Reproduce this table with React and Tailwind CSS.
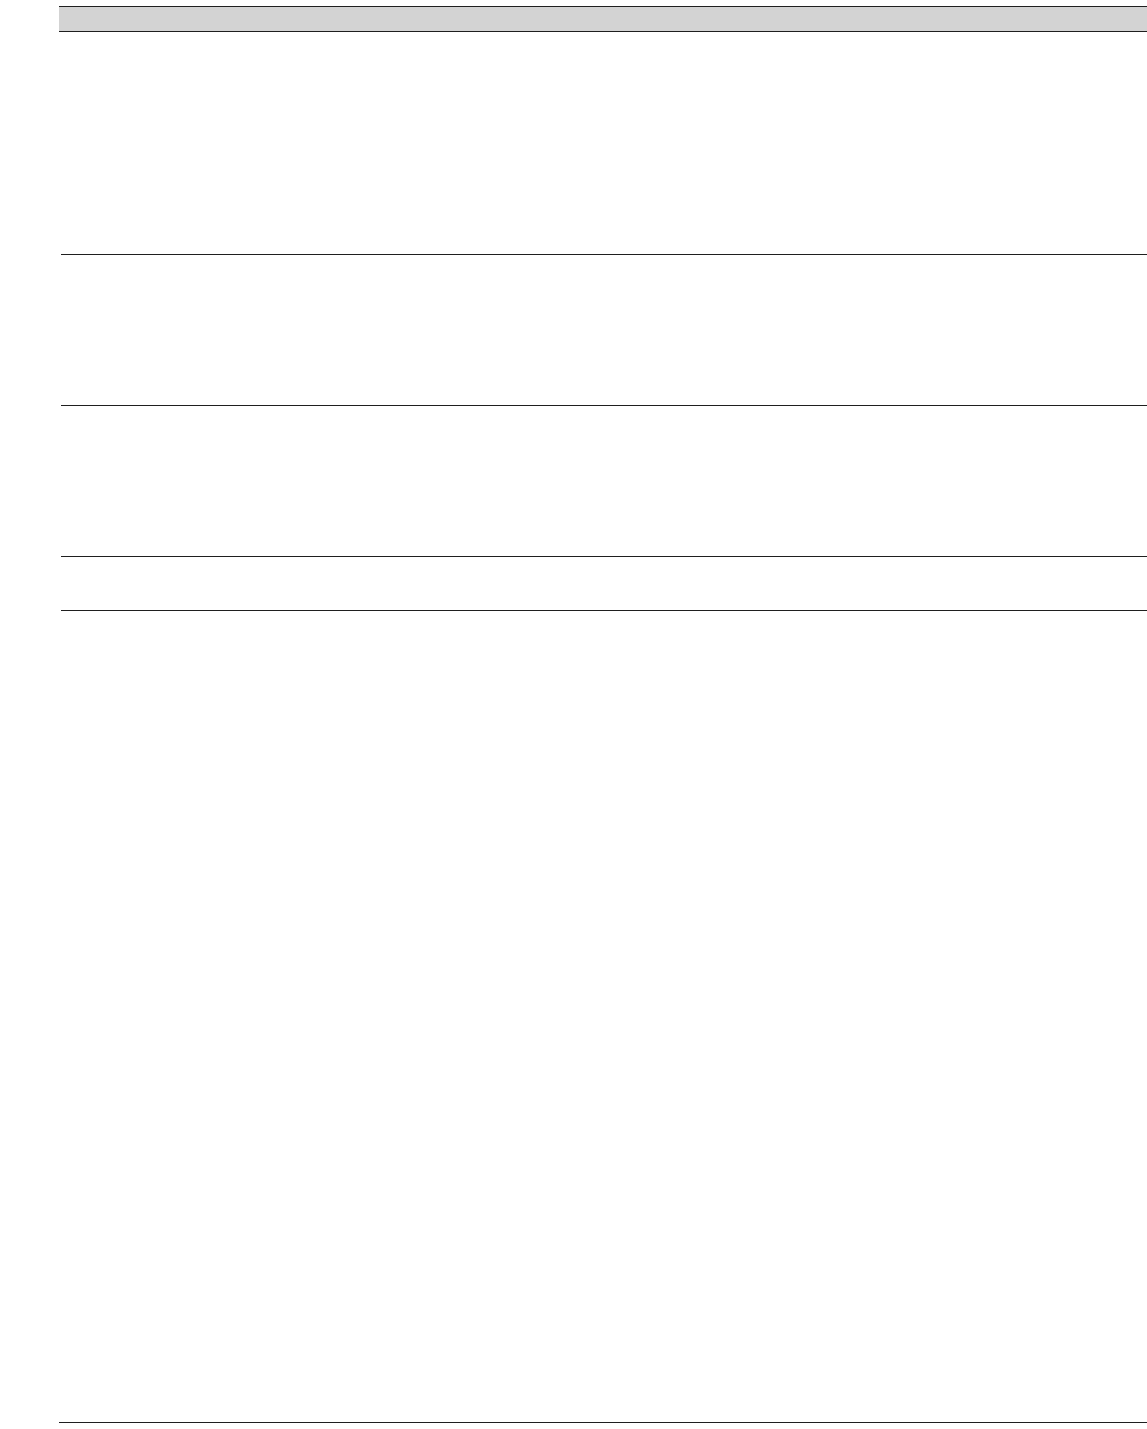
import React from 'react';

const rows = [
  { id: 1, h: 'h-[223px]' },
  { id: 2, h: 'h-[151px]' },
  { id: 3, h: 'h-[151px]' },
  { id: 4, h: 'h-[54px]' },
];

const App = () => {
  return (
    <div className="min-h-[1429px] bg-white pt-[6px] pl-[59px] font-['Liberation_Sans',sans-serif] overflow-hidden">
      {/* Header row */}
      <div className="h-[26px] bg-[#d3d3d3] border-y border-[#1f1f1f]"></div>

      {/* Body rows */}
      <div className="pl-[2px]">
        {rows.map((row) => (
          <div key={row.id} className={`${row.h} border-b border-[#1f1f1f]`}></div>
        ))}
      </div>

      {/* Empty area + footer line */}
      <div className="h-[812px] border-b border-[#1f1f1f]"></div>
    </div>
  );
};

export default App;
